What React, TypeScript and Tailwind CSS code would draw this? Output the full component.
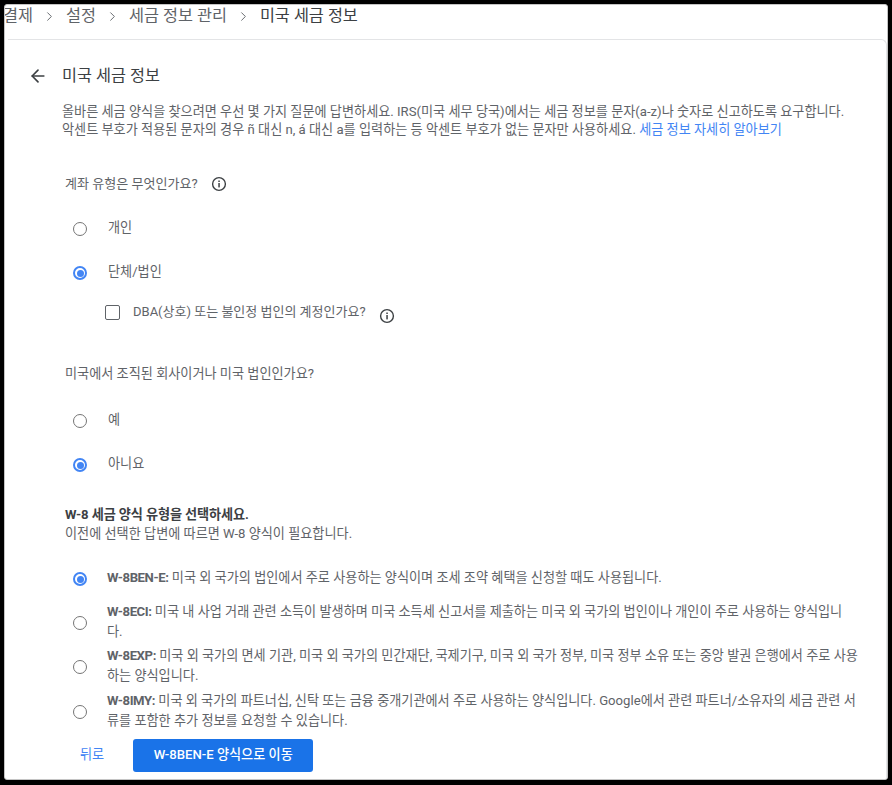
import { ArrowLeft, ChevronRight } from 'lucide-react'

const FONT = "[font-family:Roboto,'Noto_Sans_CJK_KR',sans-serif]"

function Radio({ checked }: { checked?: boolean }) {
  if (checked) {
    return (
      <span className="flex size-[14px] shrink-0 items-center justify-center rounded-full border-2 border-[#4285f4]">
        <span className="size-[7px] rounded-full bg-[#4285f4]" />
      </span>
    )
  }
  return <span className="block size-[14px] shrink-0 rounded-full border-[1.5px] border-[#757575]" />
}

function InfoIcon() {
  return (
    <svg viewBox="0 0 16 16" className="size-[16px] shrink-0 text-[#3c4043]" fill="none">
      <circle cx="8" cy="8" r="6.4" stroke="currentColor" strokeWidth="1.4" />
      <rect x="7.3" y="7" width="1.5" height="4.4" fill="currentColor" />
      <rect x="7.3" y="4.5" width="1.5" height="1.5" fill="currentColor" />
    </svg>
  )
}

function SimpleOption({ label, checked }: { label: string; checked?: boolean }) {
  return (
    <div className="flex h-[18px] items-center pl-[8px]">
      <Radio checked={checked} />
      <span className="ml-[21px] -translate-y-[1px] text-[13.15px] text-[#5f6368]">{label}</span>
    </div>
  )
}

function FormOption({ name, lines, checked }: { name: string; lines: string[]; checked?: boolean }) {
  return (
    <div className="flex items-center pl-[8px]">
      <span className="translate-y-[1px]">
        <Radio checked={checked} />
      </span>
      <div className="ml-[20px] text-[13.15px] leading-[20px] whitespace-nowrap text-[#5f6368]">
        <div>
          <span className="font-bold tracking-[-0.4px]">{name}</span> {lines[0]}
        </div>
        {lines[1] && <div>{lines[1]}</div>}
      </div>
    </div>
  )
}

function Crumb() {
  return <ChevronRight className="mx-[9px] size-[15px]" strokeWidth={1.5} />
}

export default function App() {
  return (
    <div className={`${FONT} h-[785px] w-[892px] overflow-hidden bg-black pt-[4px] pr-[4px] pb-[5px] pl-[4px]`}>
      <div className="h-full w-full overflow-hidden rounded-[3px] border border-[#c4c4c4] bg-white">
        <div className="flex h-[34px] items-center pb-[12px] text-[16.3px] text-[#5f6368]">
          <span className="-ml-[2px]">결제</span>
          <Crumb />
          <span>설정</span>
          <Crumb />
          <span>세금 정보 관리</span>
          <Crumb />
          <span className="text-[#3c4043]">미국 세금 정보</span>
        </div>

        <div className="ml-[3px] h-full rounded-tr-[6px] border-t border-r border-[#e3e4e6] pl-[22px]">
          <div className="flex h-[36px] items-center pt-[36px]">
            <ArrowLeft className="-ml-[2px] size-[20px] text-[#3c4043]" strokeWidth={2} />
            <h1 className="ml-[14px] text-[16.3px] font-normal text-[#3c4043]">미국 세금 정보</h1>
          </div>

          <p className="mt-[27px] pl-[32px] text-[13.15px] leading-[18px] whitespace-nowrap text-[#5f6368]">
            올바른 세금 양식을 찾으려면 우선 몇 가지 질문에 답변하세요. IRS(미국 세무 당국)에서는 세금 정보를 문자(a-z)나 숫자로 신고하도록 요구합니다.
            <br />
            악센트 부호가 적용된 문자의 경우 ñ 대신 n, á 대신 a를 입력하는 등 악센트 부호가 없는 문자만 사용하세요.{' '}
            <span className="text-[#4285f4]">세금 정보 자세히 알아보기</span>
          </p>

          <div className="mt-[36px] pl-[35px]">
            <div className="flex h-[18px] items-center gap-[13px] text-[13.05px] text-[#5f6368]">
              계좌 유형은 무엇인가요?
              <InfoIcon />
            </div>

            <div className="mt-[27px] flex flex-col gap-[26px]">
              <SimpleOption label="개인" />
              <SimpleOption checked label="단체/법인" />
            </div>

            <div className="mt-[21px] ml-[40px] flex h-[18px] items-center">
              <span className="block size-[15px] rounded-[2px] border-[1.5px] border-[#5f6368]" />
              <span className="ml-[13px] text-[13px] text-[#5f6368]">DBA(상호) 또는 불인정 법인의 계정인가요?</span>
              <span className="ml-[13px] translate-y-[4px]"><InfoIcon /></span>
            </div>

            <div className="mt-[44px] text-[13.15px] leading-[18px] text-[#5f6368]">미국에서 조직된 회사이거나 미국 법인인가요?</div>

            <div className="mt-[29px] flex flex-col gap-[26px]">
              <SimpleOption label="예" />
              <SimpleOption checked label="아니요" />
            </div>

            <div className="mt-[32px] text-[13.15px] leading-[18.5px] text-[#5f6368]">
              <div className="font-bold tracking-[-0.1px] text-[#3c4043]">W-8 세금 양식 유형을 선택하세요.</div>
              <div>이전에 선택한 답변에 따르면 W-8 양식이 필요합니다.</div>
            </div>

            <div className="mt-[25px] flex flex-col gap-[4.5px]">
              <div className="mb-[9px]">
                <FormOption checked name="W-8BEN-E:" lines={['미국 외 국가의 법인에서 주로 사용하는 양식이며 조세 조약 혜택을 신청할 때도 사용됩니다.']} />
              </div>
              <FormOption name="W-8ECI:" lines={['미국 내 사업 거래 관련 소득이 발생하며 미국 소득세 신고서를 제출하는 미국 외 국가의 법인이나 개인이 주로 사용하는 양식입니', '다.']} />
              <FormOption name="W-8EXP:" lines={['미국 외 국가의 면세 기관, 미국 외 국가의 민간재단, 국제기구, 미국 외 국가 정부, 미국 정부 소유 또는 중앙 발권 은행에서 주로 사용', '하는 양식입니다.']} />
              <FormOption name="W-8IMY:" lines={['미국 외 국가의 파트너십, 신탁 또는 금융 중개기관에서 주로 사용하는 양식입니다. Google에서 관련 파트너/소유자의 세금 관련 서', '류를 포함한 추가 정보를 요청할 수 있습니다.']} />
            </div>

            <div className="mt-[8px] flex items-center">
              <span className="ml-[15px] text-[13.15px] text-[#4285f4]">뒤로</span>
              <button className="ml-[29px] h-[33px] w-[180px] rounded-[3px] bg-[#1a73e8] text-[13.15px] font-medium text-white">
                W-8BEN-E 양식으로 이동
              </button>
            </div>
          </div>
        </div>
      </div>
    </div>
  )
}
